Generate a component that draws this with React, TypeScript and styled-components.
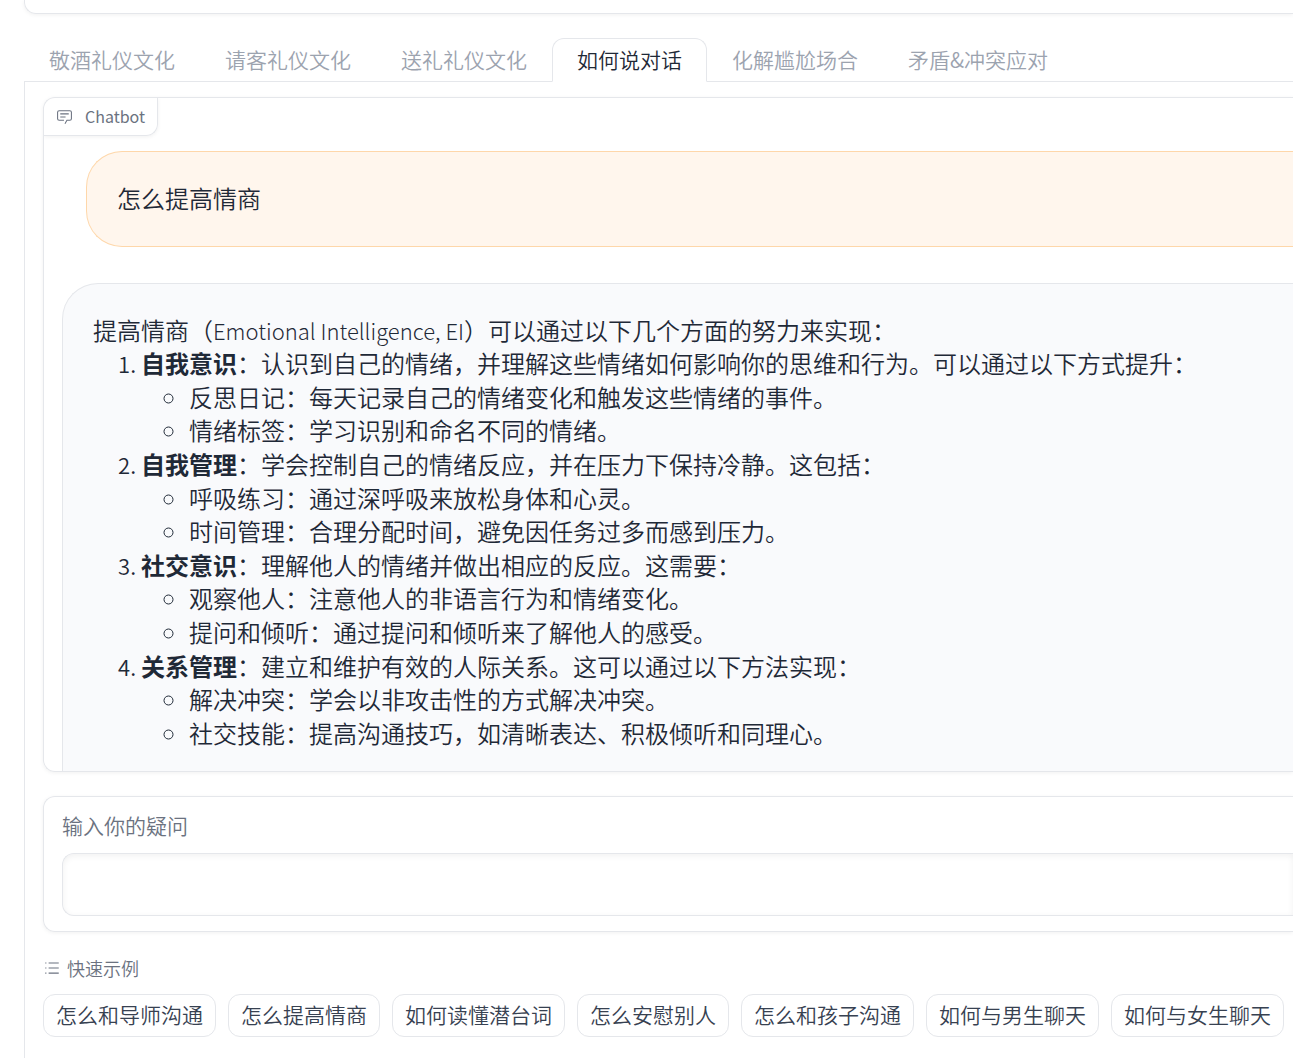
import React, { useState } from "react";
import styled, { createGlobalStyle } from "styled-components";

const GlobalStyle = createGlobalStyle`
  *, *::before, *::after { box-sizing: border-box; }
  body {
    margin: 0;
    background: #ffffff;
    color: #1f2937;
    font-family: "Noto Sans CJK SC", "Noto Sans", sans-serif;
    font-weight: 350;
    overflow: hidden;
  }
  button, textarea { font: inherit; color: inherit; }
`;

const line = "#e5e7eb";
const blockShadow = "0 1px 4px 0 rgba(0, 0, 0, 0.06)";

const Page = styled.main`
  padding-left: 24px;
`;

const PreviousBlock = styled.section`
  height: 14px;
  border: solid ${line};
  border-width: 0 0 1px 1px;
  border-bottom-left-radius: 12px;
  box-shadow: ${blockShadow};
`;

const TabBar = styled.div`
  display: flex;
  margin-top: 24px;
  border-bottom: 1px solid ${line};
`;

const Tab = styled.button<{ $active: boolean }>`
  flex: none;
  height: 44px;
  margin-bottom: -1px;
  padding: 0 24px 2px;
  border: 1px solid ${(p) => (p.$active ? line : "transparent")};
  border-bottom-color: ${(p) => (p.$active ? "#ffffff" : "transparent")};
  border-radius: 12px 12px 0 0;
  background: ${(p) => (p.$active ? "#ffffff" : "transparent")};
  color: ${(p) => (p.$active ? "#1f2937" : "#9ca3af")};
  font-size: 21px;
  line-height: 32px;
  white-space: nowrap;
  cursor: pointer;
`;

const TabPanel = styled.div`
  display: flex;
  flex-direction: column;
  gap: 24px;
  padding: 15px 0 24px 18px;
  border-left: 1px solid ${line};
`;

const Block = styled.section`
  border: solid ${line};
  border-width: 1px 0 1px 1px;
  border-radius: 12px 0 0 12px;
  box-shadow: ${blockShadow};
`;

const ChatBlock = styled(Block)`
  position: relative;
  height: 675px;
  overflow: hidden;
`;

const ChatLabel = styled.h2`
  position: absolute;
  top: 0;
  left: 0;
  display: flex;
  align-items: center;
  gap: 12px;
  height: 38px;
  margin: 0;
  padding: 0 12px 1px;
  border: solid ${line};
  border-width: 0 1px 1px 0;
  border-bottom-right-radius: 12px;
  box-shadow: ${blockShadow};
  color: #6b7280;
  font-size: 16px;
  font-weight: 400;
  line-height: 24px;
`;

const Messages = styled.div`
  display: flex;
  flex-direction: column;
  gap: 36px;
  padding: 53px 0 0 18px;
`;

const Bubble = styled.article<{ $from: "user" | "bot" }>`
  margin-left: ${(p) => (p.$from === "user" ? "24px" : "0")};
  padding: 29px 30px 31px;
  border: 1px solid ${(p) => (p.$from === "user" ? "#fed7aa" : line)};
  border-right: 0;
  border-radius: ${(p) => (p.$from === "user" ? "36px 0 0 36px" : "36px 0 0 0")};
  background: ${(p) => (p.$from === "user" ? "#fff6ed" : "#f9fafc")};
  font-size: 24px;
  line-height: 1.4;

  p { margin: 0; }
  strong { font-weight: 700; }
`;

const Latin = styled.span`
  font-size: 22px;
  font-weight: 300;
  line-height: 1;
`;

const Points = styled.ol`
  margin: 0;
  padding-left: 48px;

  > li::marker { font-size: 22px; }
`;

const SubPoints = styled.ul`
  margin: 0;
  padding-left: 48px;
  list-style: circle;
`;

const QuestionBlock = styled(Block)`
  display: flex;
  flex-direction: column;
  gap: 12px;
  padding: 12px 0 15px 18px;
`;

const QuestionLabel = styled.label`
  color: #6b7280;
  font-size: 21px;
  line-height: 32px;
`;

const QuestionInput = styled.textarea`
  display: block;
  width: 100%;
  height: 63px;
  padding: 15px;
  border: solid ${line};
  border-width: 1px 0 1px 1px;
  border-radius: 12px 0 0 12px;
  box-shadow: inset 0 2px 6px 0 rgba(0, 0, 0, 0.06);
  background: #ffffff;
  font-size: 21px;
  line-height: 32px;
  outline: none;
  resize: none;
`;

const Examples = styled.section`
  display: flex;
  flex-direction: column;
  gap: 14px;
`;

const ExamplesTitle = styled.h3`
  display: flex;
  align-items: center;
  gap: 6px;
  margin: 0;
  color: #6b7280;
  font-size: 18px;
  font-weight: 350;
  line-height: 24px;
`;

const ChipRow = styled.div`
  display: flex;
  flex-wrap: wrap;
  gap: 12px;
`;

const Chip = styled.button`
  height: 43px;
  padding: 0 12px 3px;
  border: 1px solid ${line};
  border-radius: 12px;
  background: #ffffff;
  color: #374151;
  font-size: 21px;
  line-height: 32px;
  white-space: nowrap;
  cursor: pointer;
`;

const ChatIcon = () => (
  <svg width="17" height="17" viewBox="0 0 32 32" fill="currentColor" aria-hidden="true">
    <path d="M17.74 30L16 29l4-7h6a2 2 0 0 0 2-2V8a2 2 0 0 0-2-2H6a2 2 0 0 0-2 2v12a2 2 0 0 0 2 2h9v2H6a4 4 0 0 1-4-4V8a4 4 0 0 1 4-4h20a4 4 0 0 1 4 4v12a4 4 0 0 1-4 4h-4.84Z" />
    <path d="M8 10h16v2H8zm0 6h10v2H8z" />
  </svg>
);

const ListIcon = () => (
  <svg width="18" height="18" viewBox="0 0 32 32" fill="currentColor" aria-hidden="true">
    <path d="M10 6h18v2H10zm0 18h18v2H10zm0-9h18v2H10zm-6 0h2v2H4zm0-9h2v2H4zm0 18h2v2H4z" />
  </svg>
);

const tabs = ["敬酒礼仪文化", "请客礼仪文化", "送礼礼仪文化", "如何说对话", "化解尴尬场合", "矛盾&冲突应对"];

const points = [
  {
    title: "自我意识",
    text: "：认识到自己的情绪，并理解这些情绪如何影响你的思维和行为。可以通过以下方式提升：",
    items: ["反思日记：每天记录自己的情绪变化和触发这些情绪的事件。", "情绪标签：学习识别和命名不同的情绪。"],
  },
  {
    title: "自我管理",
    text: "：学会控制自己的情绪反应，并在压力下保持冷静。这包括：",
    items: ["呼吸练习：通过深呼吸来放松身体和心灵。", "时间管理：合理分配时间，避免因任务过多而感到压力。"],
  },
  {
    title: "社交意识",
    text: "：理解他人的情绪并做出相应的反应。这需要：",
    items: ["观察他人：注意他人的非语言行为和情绪变化。", "提问和倾听：通过提问和倾听来了解他人的感受。"],
  },
  {
    title: "关系管理",
    text: "：建立和维护有效的人际关系。这可以通过以下方法实现：",
    items: ["解决冲突：学会以非攻击性的方式解决冲突。", "社交技能：提高沟通技巧，如清晰表达、积极倾听和同理心。"],
  },
];

const examples = [
  "怎么和导师沟通",
  "怎么提高情商",
  "如何读懂潜台词",
  "怎么安慰别人",
  "怎么和孩子沟通",
  "如何与男生聊天",
  "如何与女生聊天",
];

export default function App() {
  const [active, setActive] = useState(3);
  const [question, setQuestion] = useState("");

  return (
    <Page lang="zh-CN">
      <GlobalStyle />
      <PreviousBlock />
      <TabBar role="tablist">
        {tabs.map((name, i) => (
          <Tab key={name} role="tab" aria-selected={i === active} $active={i === active} onClick={() => setActive(i)}>
            {name}
          </Tab>
        ))}
      </TabBar>
      <TabPanel role="tabpanel">
        <ChatBlock>
          <ChatLabel>
            <ChatIcon />
            Chatbot
          </ChatLabel>
          <Messages>
            <Bubble $from="user">
              <p>怎么提高情商</p>
            </Bubble>
            <Bubble $from="bot">
              <p>
                提高情商（<Latin>Emotional Intelligence, EI</Latin>）可以通过以下几个方面的努力来实现：
              </p>
              <Points>
                {points.map((point) => (
                  <li key={point.title}>
                    <strong>{point.title}</strong>
                    {point.text}
                    <SubPoints>
                      {point.items.map((item) => (
                        <li key={item}>{item}</li>
                      ))}
                    </SubPoints>
                  </li>
                ))}
              </Points>
            </Bubble>
          </Messages>
        </ChatBlock>
        <QuestionBlock>
          <QuestionLabel htmlFor="question">输入你的疑问</QuestionLabel>
          <QuestionInput id="question" rows={1} value={question} onChange={(e) => setQuestion(e.target.value)} />
        </QuestionBlock>
        <Examples>
          <ExamplesTitle>
            <ListIcon />
            快速示例
          </ExamplesTitle>
          <ChipRow>
            {examples.map((text) => (
              <Chip key={text} type="button" onClick={() => setQuestion(text)}>
                {text}
              </Chip>
            ))}
          </ChipRow>
        </Examples>
      </TabPanel>
    </Page>
  );
}
